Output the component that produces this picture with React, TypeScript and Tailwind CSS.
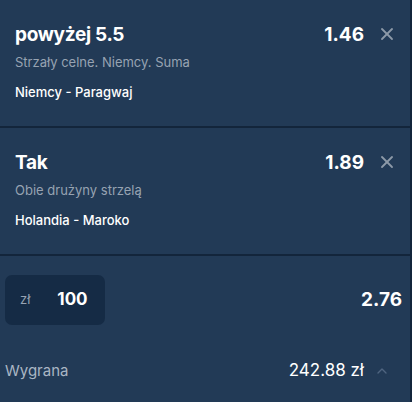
import { X, ChevronUp } from 'lucide-react';

type Bet = {
  pick: string;
  market: string;
  match: string;
  odds: string;
};

const bets: Bet[] = [
  { pick: 'powyżej 5.5', market: 'Strzały celne. Niemcy. Suma', match: 'Niemcy - Paragwaj', odds: '1.46' },
  { pick: 'Tak', market: 'Obie drużyny strzelą', match: 'Holandia - Maroko', odds: '1.89' },
];

function BetRow({ bet }: { bet: Bet }) {
  return (
    <div className="border-b-2 border-[#13253b] pl-[15px] pr-[13px] pt-[21px] pb-[24px]">
      <div className="flex items-center justify-between h-[26px]">
        <span className="text-[19px] font-bold text-white leading-none tracking-[-0.3px]">{bet.pick}</span>
        <div className="flex items-center gap-[13px]">
          <span className="text-[19px] font-bold text-white leading-none">{bet.odds}</span>
          <X className="w-[20px] h-[20px] text-[#8d99a8]" strokeWidth={2.2} />
        </div>
      </div>
      <div className="mt-[5px] text-[13px] text-[#97a3b2] leading-[20px]">{bet.market}</div>
      <div className="mt-[10px] text-[13px] font-medium text-white leading-[20px]">{bet.match}</div>
    </div>
  );
}

export default function App() {
  return (
    <div className="w-[412px] h-[402px] bg-[#223a56] border-r-2 border-[#13253b] flex flex-col" style={{ fontFamily: 'Inter, "Noto Sans", sans-serif' }}>
      {bets.map((b) => (
        <BetRow key={b.odds} bet={b} />
      ))}

      {/* stake input + total odds */}
      <div className="flex items-center justify-between pl-[5px] pr-[8px] pt-[19px]">
        <div className="w-[100px] h-[50px] rounded-[7px] bg-[#152b45] flex items-center pl-[15px]">
          <span className="text-[13px] text-[#97a3b2]">zł</span>
          <span className="ml-[27px] text-[17px] font-bold text-white">100</span>
        </div>
        <span className="text-[19px] font-bold text-white">2.76</span>
      </div>

      {/* potential winnings */}
      <div className="flex items-center justify-between pl-[5px] pr-[20px] mt-[33px]">
        <span className="text-[15px] text-[#aab6c4]">Wygrana</span>
        <div className="flex items-center gap-[10px]">
          <span className="text-[17px] text-white">242.88 zł</span>
          <ChevronUp className="w-[16px] h-[16px] text-[#4f6580]" strokeWidth={2} />
        </div>
      </div>
    </div>
  );
}
